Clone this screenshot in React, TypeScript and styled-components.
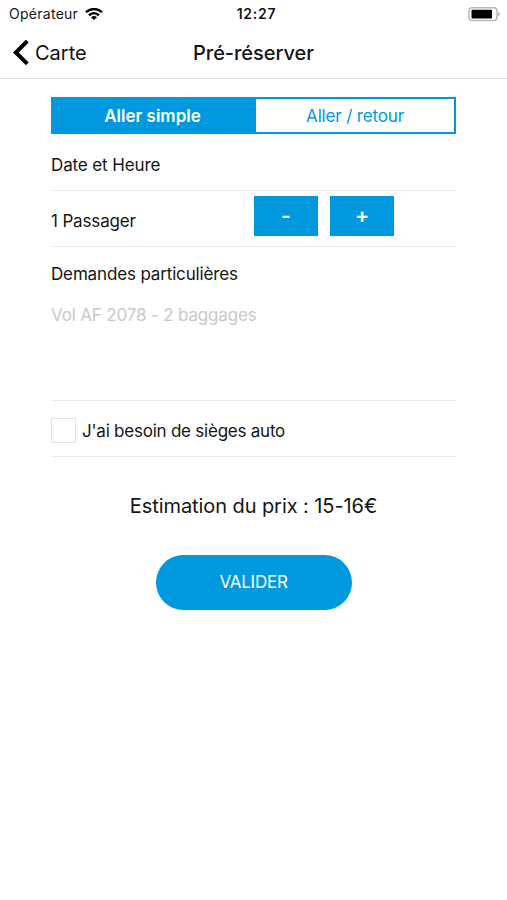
import React, { useState } from "react";
import styled, { createGlobalStyle } from "styled-components";

const BLUE = "#0099e0";
const LINE = "#eaeaea";

const GlobalStyle = createGlobalStyle`
  * { box-sizing: border-box; }
  body { margin: 0; background: #fff; }
  button { font: inherit; border: 0; padding: 0; cursor: pointer; }
`;

const Screen = styled.main`
  width: 507px;
  height: 900px;
  background: #fff;
  color: #151515;
  font-family: Inter, "Liberation Sans", sans-serif;
  overflow: hidden;
`;

const Text = styled.span<{ $size?: number; $track?: number; $weight?: number }>`
  font-size: ${(p) => p.$size ?? 17}px;
  font-weight: ${(p) => p.$weight ?? 400};
  letter-spacing: ${(p) => p.$track ?? 0}px;
  line-height: 24px;
  white-space: nowrap;
`;

const StatusBar = styled.div`
  height: 27px;
  display: grid;
  grid-template-columns: 1fr auto 1fr;
  align-items: center;
  padding: 1px 6px 0 9px;
`;

const Carrier = styled.div`
  display: flex;
  align-items: center;
  gap: 7px;
`;

const Clock = styled.time`
  padding-left: 3px;
`;

const Battery = styled.svg`
  justify-self: end;
`;

const NavBar = styled.header`
  height: 52px;
  display: grid;
  grid-template-columns: 1fr auto 1fr;
  align-items: center;
  padding: 0 13px;
  border-bottom: 1px solid #dedede;
`;

const BackButton = styled.button`
  display: flex;
  align-items: center;
  gap: 6px;
  color: #111;
  background: none;
`;

const Form = styled.section`
  width: 405px;
  margin: 18px 0 0 51px;
`;

const Segments = styled.div`
  height: 37px;
  display: grid;
  grid-template-columns: 203px 1fr;
  border: 2px solid ${BLUE};
`;

const Segment = styled.button<{ $active: boolean }>`
  color: ${(p) => (p.$active ? "#fff" : BLUE)};
  background: ${(p) => (p.$active ? BLUE : "#fff")};
  padding-right: ${(p) => (p.$active ? 4 : 0)}px;
`;

const Row = styled.div<{ $height: number; $drop?: number }>`
  height: ${(p) => p.$height}px;
  padding-top: ${(p) => p.$drop ?? 0}px;
  display: flex;
  align-items: center;
  border-bottom: 1px solid ${LINE};
`;

const PassengerLabel = styled.div`
  width: 203px;
  padding-top: 5px;
`;

const Stepper = styled.div`
  display: flex;
  gap: 12px;
  margin-top: -6px;
`;

const StepButton = styled.button`
  width: 64px;
  height: 40px;
  color: #fff;
  background: ${BLUE};
`;

const Requests = styled.label`
  height: 154px;
  display: flex;
  flex-direction: column;
  gap: 17px;
  padding-top: 15px;
  border-bottom: 1px solid ${LINE};
`;

const Placeholder = styled.div`
  color: #c9c9c9;
  display: flex;
`;

const CheckBox = styled.span`
  width: 25px;
  height: 25px;
  margin: 4px 6px 0 0;
  border: 1.5px solid #e2e2e2;
`;

const CheckLabel = styled.div`
  padding-top: 5px;
`;

const Footer = styled.footer`
  display: flex;
  flex-direction: column;
  align-items: center;
  padding-top: 37px;
  gap: 37px;
`;

const Submit = styled.button`
  width: 196px;
  height: 55px;
  padding-bottom: 1px;
  border-radius: 28px;
  color: #fff;
  background: ${BLUE};
`;

export default function App() {
  const [roundTrip, setRoundTrip] = useState(false);
  const [count, setCount] = useState(1);
  return (
    <Screen>
      <GlobalStyle />
      <StatusBar>
        <Carrier>
          <Text $size={14} $track={0.27}>Opérateur</Text>
          <svg width="18" height="13" viewBox="0 0 18 13" fill="none" stroke="#000" strokeWidth="2.5">
            <path d="M1 4.2C5.6 0 12.4 0 17 4.2" />
            <path d="M4 7.4C7 4.5 11 4.5 14 7.4" />
            <path d="M9 11.9 6 9.2Q9 6.7 12 9.2Z" fill="#000" stroke="none" />
          </svg>
        </Carrier>
        <Clock><Text $size={14} $weight={600} $track={0.75}>12:27</Text></Clock>
        <Battery width="33" height="15" viewBox="0 0 33 15">
          <rect x="1" y="0.8" width="28" height="12.6" rx="3" fill="#fff" stroke="#b8b8b8" strokeWidth="1.5" />
          <rect x="3.5" y="2.8" width="20.5" height="8.7" rx="1" fill="#000" />
          <path d="M30.4 5.1Q32 5.8 32 7.1T30.4 9.1Z" fill="#aaa" />
        </Battery>
      </StatusBar>
      <NavBar>
        <BackButton>
          <svg width="16" height="26" viewBox="0 0 16 26" fill="none" stroke="#000" strokeWidth="4">
            <path d="M14.3 1.1 2.8 12.5 14.3 23.9" />
          </svg>
          <Text $size={20}>Carte</Text>
        </BackButton>
        <Text $size={20} $weight={500} $track={-0.05}>Pré-réserver</Text>
      </NavBar>
      <Form>
        <Segments>
          <Segment $active={!roundTrip} onClick={() => setRoundTrip(false)}>
            <Text $weight={600}>Aller simple</Text>
          </Segment>
          <Segment $active={roundTrip} onClick={() => setRoundTrip(true)}>
            <Text $track={-0.16}>Aller / retour</Text>
          </Segment>
        </Segments>
        <Row $height={57} $drop={5}><Text $track={-0.12}>Date et Heure</Text></Row>
        <Row $height={56}>
          <PassengerLabel><Text $track={-0.15}>{count} Passager</Text></PassengerLabel>
          <Stepper>
            <StepButton onClick={() => setCount(Math.max(1, count - 1))}><Text $size={21} $weight={600}>-</Text></StepButton>
            <StepButton onClick={() => setCount(count + 1)}><Text $size={21} $weight={600}>+</Text></StepButton>
          </Stepper>
        </Row>
        <Requests>
          <Text $track={-0.15}>Demandes particulières</Text>
          <Placeholder><Text $track={-0.17}>Vol AF 2078 - 2 baggages</Text></Placeholder>
        </Requests>
        <Row $height={56}>
          <CheckBox />
          <CheckLabel><Text $track={-0.23}>J'ai besoin de sièges auto</Text></CheckLabel>
        </Row>
      </Form>
      <Footer>
        <Text $size={20} $track={-0.08}>Estimation du prix : 15-16€</Text>
        <Submit><Text $track={-0.25}>VALIDER</Text></Submit>
      </Footer>
    </Screen>
  );
}
